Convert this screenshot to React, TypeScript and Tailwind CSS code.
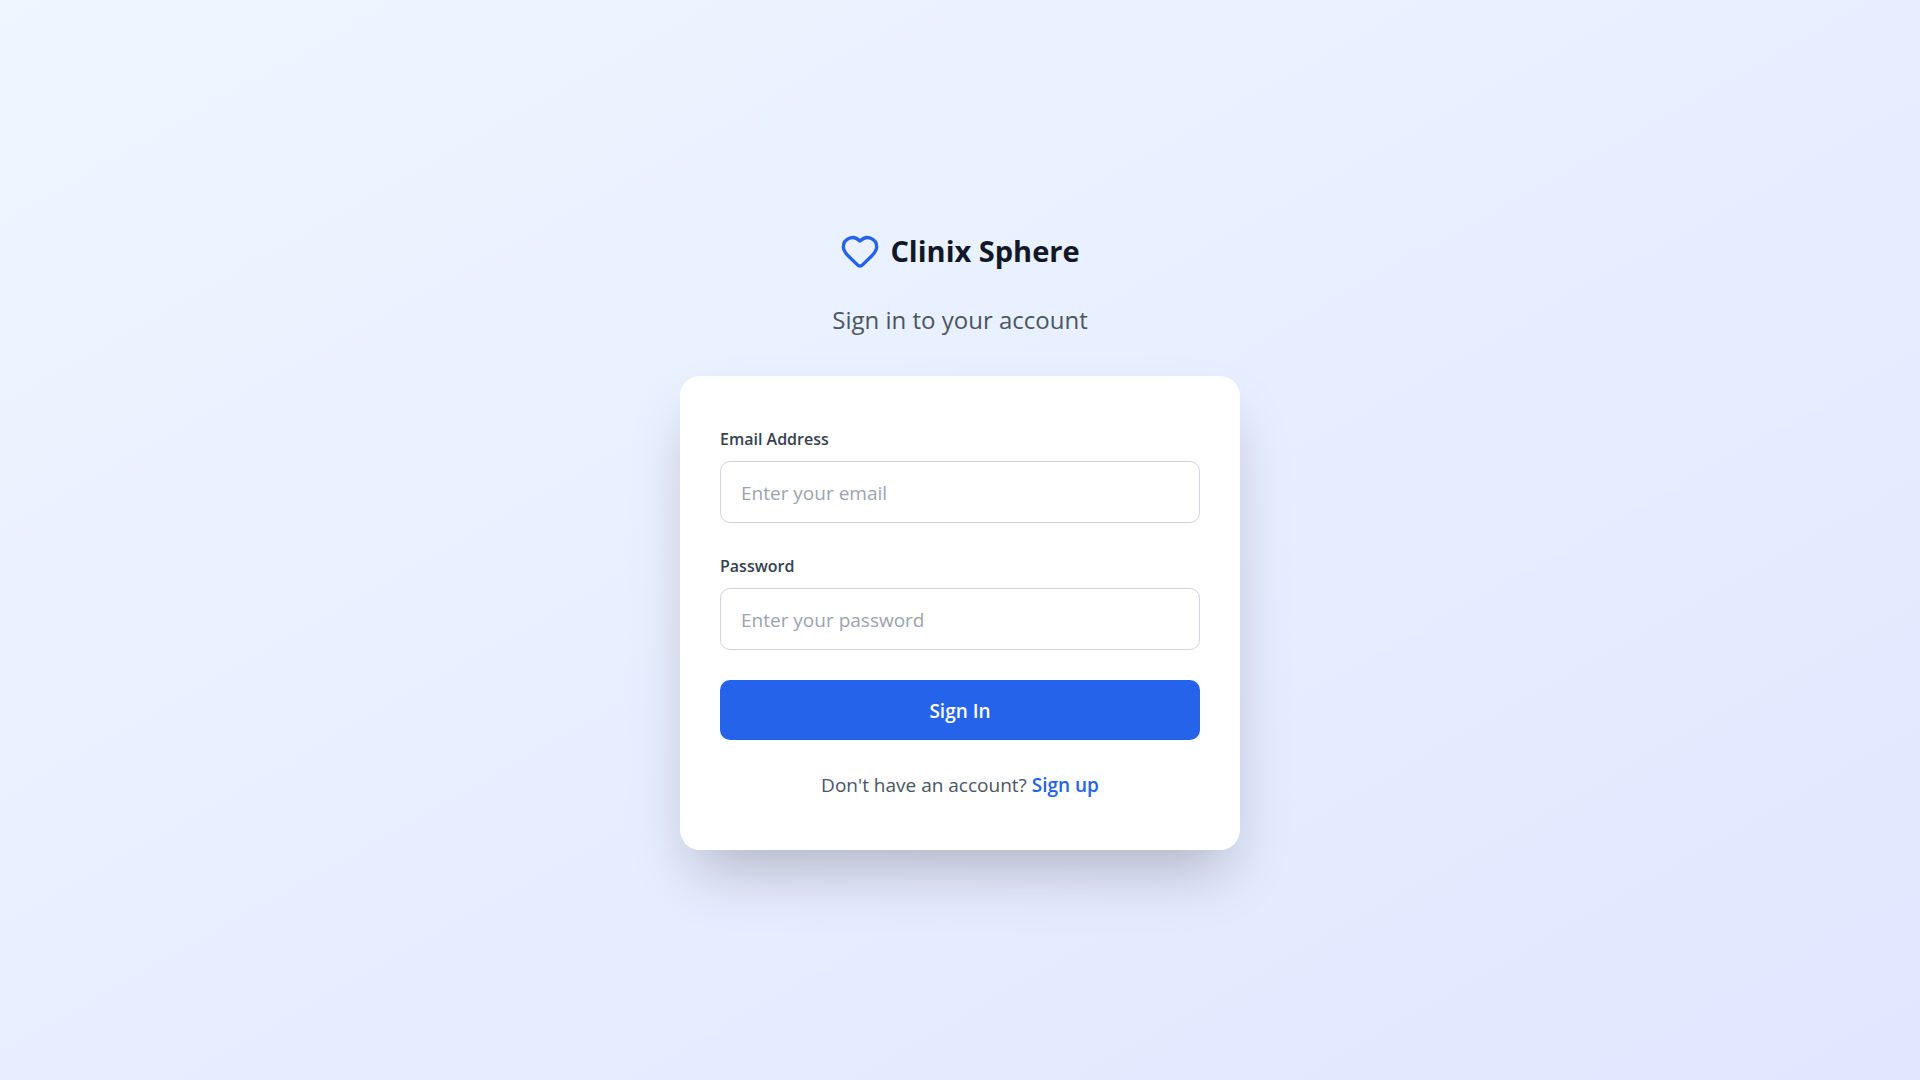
import { Heart } from "lucide-react";

function Field({ id, label, type, placeholder }: { id: string; label: string; type: string; placeholder: string }) {
  return (
    <div>
      <label htmlFor={id} className="mb-2 block text-base leading-[27px] font-semibold text-[#374151]">
        {label}
      </label>
      <input
        id={id}
        type={type}
        placeholder={placeholder}
        className="block w-full rounded-[10px] border border-[#d1d5db] bg-white px-5 pt-4 pb-3.5 text-[19px] leading-[30px] text-[#111827] placeholder:text-[#9ca3af]"
      />
    </div>
  );
}

export default function App() {
  return (
    <main className="flex min-h-screen items-center justify-center bg-linear-to-br/srgb from-[#eff6ff] to-[#e0e7ff] font-['Open_Sans',sans-serif]">
      <div className="w-full max-w-[560px]">
        <header className="mb-9 text-center">
          <div className="mb-7 flex items-center justify-center gap-2.5">
            <Heart className="size-10 text-[#2563eb]" />
            <h1 className="text-[29px] leading-[42px] font-bold text-[#111827]">Clinix Sphere</h1>
          </div>
          <h2 className="text-2xl leading-10 text-[#4b5563]">Sign in to your account</h2>
        </header>
        <div className="rounded-[20px] bg-white px-10 py-[50px] shadow-[0_31px_62px_-15px_rgb(0_0_0/0.25)]">
          <form className="space-y-[30px]">
            <Field id="email" label="Email Address" type="email" placeholder="Enter your email" />
            <Field id="password" label="Password" type="password" placeholder="Enter your password" />
            <button type="button" className="block w-full rounded-[10px] bg-[#2563eb] pt-4 pb-3.5 text-[19px] leading-[30px] font-semibold text-white">
              Sign In
            </button>
          </form>
          <p className="mt-[30px] text-center text-[19px] leading-[30px] text-[#4b5563]">
            Don't have an account? <a href="#signup" className="font-semibold text-[#2563eb]">Sign up</a>
          </p>
        </div>
      </div>
    </main>
  );
}
